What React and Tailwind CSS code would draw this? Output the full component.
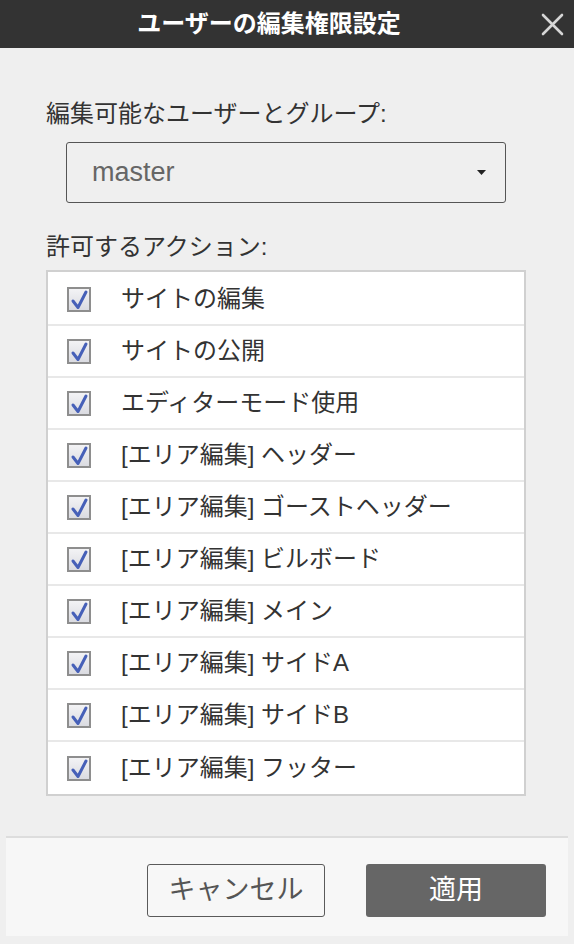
import React from 'react';

const font = { fontFamily: '"Liberation Sans", "Noto Sans CJK JP", sans-serif' };

const actions = [
    'サイトの編集',
    'サイトの公開',
    'エディターモード使用',
    '[エリア編集] ヘッダー',
    '[エリア編集] ゴーストヘッダー',
    '[エリア編集] ビルボード',
    '[エリア編集] メイン',
    '[エリア編集] サイドA',
    '[エリア編集] サイドB',
    '[エリア編集] フッター'
];

const CheckBox = () => (
    <svg width="24" height="25" viewBox="0 0 24 25" className="shrink-0">
        <defs>
            <linearGradient id="cbg" x1="0" y1="0" x2="0" y2="1">
                <stop offset="0" stopColor="#f4f4f6" />
                <stop offset="1" stopColor="#d9dae0" />
            </linearGradient>
        </defs>
        <rect x="1" y="1" width="22" height="23" fill="url(#cbg)" stroke="#8e8e8e" strokeWidth="2" />
        <path d="M6 14 L11 20.5 L19 5" fill="none" stroke="#4660b8" strokeWidth="3" strokeLinecap="round" strokeLinejoin="round" />
    </svg>
);

export default function App() {
    return (
        <div className="w-[574px] h-[944px] bg-[#efefef] flex flex-col text-[#333]" style={font}>
            {/* Header */}
            <div className="h-[48px] bg-[#333333] flex items-center pr-[8px] shrink-0">
                <div className="flex-1 text-center text-white font-bold text-[24px] leading-none">
                    ユーザーの編集権限設定
                </div>
                <button className="w-[28px] h-[28px] flex items-center justify-center">
                    <svg width="23" height="23" viewBox="0 0 23 23">
                        <path d="M2 2 L21 21 M21 2 L2 21" stroke="#d6d6d6" strokeWidth="2.6" strokeLinecap="round" />
                    </svg>
                </button>
            </div>

            {/* Body */}
            <div className="flex-1 px-[46px] pt-[50px]">
                <div className="text-[24px] leading-[32px]">編集可能なユーザーとグループ:</div>
                <div className="mt-[12px] ml-[20px] w-[440px] h-[61px] border border-[#555] rounded-[3px] flex items-center justify-between pl-[25px] pr-[19px]">
                    <span className="text-[27px] text-[#666]">master</span>
                    <svg width="9" height="5" viewBox="0 0 9 5">
                        <path d="M0 0 H9 L4.5 5 Z" fill="#222" />
                    </svg>
                </div>

                <div className="mt-[28px] text-[24px] leading-[32px]">許可するアクション:</div>
                <div className="mt-[7px] w-[480px] border-2 border-[#d0d0d0] bg-white pt-[2px]">
                    {actions.map((label, i) => (
                        <div
                            key={i}
                            className={`h-[52px] flex items-center pl-[19px] gap-[30px] ${i < actions.length - 1 ? 'border-b-2 border-[#e8e8e8]' : ''}`}
                        >
                            <CheckBox />
                            <span className="text-[24px] leading-none">{label}</span>
                        </div>
                    ))}
                </div>
            </div>

            {/* Footer */}
            <div className="mx-[6px] mb-[8px] h-[100px] border-t-2 border-[#dddddd] bg-[#f7f7f7] flex justify-end items-start pt-[26px] pr-[22px] gap-[41px] shrink-0">
                <button className="w-[178px] h-[53px] border-[1.5px] border-[#5a5a5a] rounded-[3px] text-[27px] text-[#555]">
                    キャンセル
                </button>
                <button className="w-[180px] h-[53px] bg-[#666666] rounded-[3px] text-[27px] text-white">
                    適用
                </button>
            </div>
        </div>
    );
}
